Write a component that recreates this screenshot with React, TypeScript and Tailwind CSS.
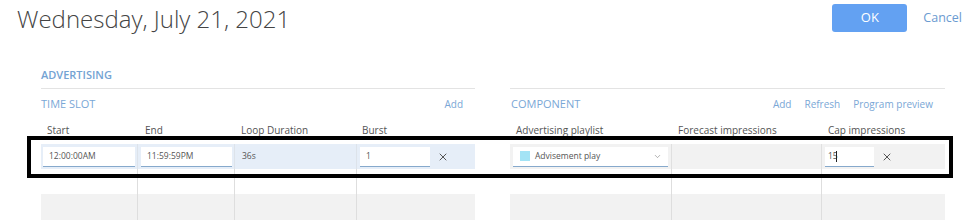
import { X, ChevronDown } from "lucide-react";

function DelIcon() {
  return <X size={12} strokeWidth={2} className="text-[#555]" />;
}

function Field({ value, className }: { value: string; className: string }) {
  return (
    <div
      className={`h-[20px] bg-white border-b border-[#86a9cc] flex items-center pl-[6px] text-[8.5px] text-[#555] ${className}`}
    >
      {value}
    </div>
  );
}

export default function App() {
  return (
    <div className="relative w-[980px] h-[221px] overflow-hidden bg-white font-['Open_Sans',sans-serif]">
      {/* header */}
      <div className="flex items-start justify-between pl-[17px] pr-[18px] pt-[2px]">
        <h1 className="text-[24px] font-light leading-[34px] text-[#444]">
          Wednesday, July 21, 2021
        </h1>
        <div className="flex items-center gap-[16px] pt-[2px]">
          <button
            type="button"
            className="w-[75px] h-[28px] rounded-[3px] bg-[#63a1f2] text-white text-[13px]"
          >
            OK
          </button>
          <span className="text-[12.5px] text-[#6b9bd1]">Cancel</span>
        </div>
      </div>

      <div className="pl-[41px] pr-[35px]">
        <div className="mt-[32px] text-[11px] font-semibold leading-[14px] text-[#74a3d3]">
          ADVERTISING
        </div>

        <div className="mt-[6px] flex gap-[35px]">
          {/* time slot */}
          <div className="w-[434px] border-t border-[#e3e3e3]">
            <div className="mt-[8px] flex items-center justify-between pr-[12px] leading-[14px]">
              <span className="text-[11px] text-[#7aa7d6]">TIME SLOT</span>
              <span className="text-[10px] text-[#7aa7d6]">Add</span>
            </div>
            <div className="mt-[13px] grid grid-cols-[96px_97px_122px_119px] text-[10px] leading-[12px] text-[#555]">
              <span className="pl-[6px]">Start</span>
              <span className="pl-[8px]">End</span>
              <span className="pl-[7px]">Loop Duration</span>
              <span className="pl-[6px]">Burst</span>
            </div>
            <div className="mt-[8px] grid grid-cols-[96px_97px_122px_119px] h-[25px] bg-[#e6eef8]">
              <div className="flex items-center pl-[2px] pr-[2px]">
                <Field value="12:00:00AM" className="w-full" />
              </div>
              <div className="flex items-center pl-[3px] pr-[2px] border-l border-[#dde3ea]">
                <Field value="11:59:59PM" className="w-full" />
              </div>
              <div className="flex items-center pl-[7px] text-[8.5px] text-[#555] border-l border-[#dde3ea]">
                36s
              </div>
              <div className="flex items-center pl-[3px] gap-[7px] border-l border-[#dde3ea]">
                <Field value="1" className="w-[70px]" />
                <DelIcon />
              </div>
            </div>
            <div className="grid grid-cols-[96px_97px_122px_119px] h-[25px]">
              <div />
              <div className="border-l border-[#dedede]" />
              <div className="border-l border-[#dedede]" />
              <div className="border-l border-[#dedede]" />
            </div>
            <div className="grid grid-cols-[96px_97px_122px_119px] h-[26px] bg-[#f2f2f2]">
              <div />
              <div className="border-l border-[#dedede]" />
              <div className="border-l border-[#dedede]" />
              <div className="border-l border-[#dedede]" />
            </div>
          </div>

          {/* component */}
          <div className="w-[435px] border-t border-[#e3e3e3]">
            <div className="mt-[8px] flex items-center justify-between pr-[12px] leading-[14px]">
              <span className="pl-[1px] text-[11px] text-[#7aa7d6]">COMPONENT</span>
              <div className="flex gap-[13px] text-[10px] text-[#7aa7d6]">
                <span>Add</span>
                <span>Refresh</span>
                <span>Program preview</span>
              </div>
            </div>
            <div className="mt-[13px] grid grid-cols-[161px_150px_124px] text-[10px] leading-[12px] text-[#555]">
              <span className="pl-[6px]">Advertising playlist</span>
              <span className="pl-[7px]">Forecast impressions</span>
              <span className="pl-[7px]">Cap impressions</span>
            </div>
            <div className="mt-[8px] grid grid-cols-[161px_150px_124px] h-[25px] bg-[#f2f2f2]">
              <div className="flex items-center pl-[3px] pr-[3px]">
                <div className="w-full h-[20px] bg-white border-b border-[#86a9cc] flex items-center pl-[7px] pr-[6px] text-[8.5px] text-[#555]">
                  <span className="w-[10px] h-[10px] bg-[#a3e3f5]" />
                  <span className="ml-[5px] flex-1">Advisement play</span>
                  <ChevronDown size={9} strokeWidth={1.5} className="text-[#777]" />
                </div>
              </div>
              <div className="border-l border-[#e0e0e0]" />
              <div className="flex items-center pl-[3px] gap-[7px] border-l border-[#e0e0e0]">
                <div className="w-[49px] h-[20px] bg-white border-b border-[#86a9cc] flex items-center pl-[3px] text-[8.5px] text-[#555]">
                  15<span className="ml-[-2px] w-px h-[11px] bg-[#222]" />
                </div>
                <DelIcon />
              </div>
            </div>
            <div className="grid grid-cols-[161px_150px_124px] h-[25px]">
              <div />
              <div className="border-l border-[#dedede]" />
              <div className="border-l border-[#dedede]" />
            </div>
            <div className="grid grid-cols-[161px_150px_124px] h-[26px] bg-[#f2f2f2]">
              <div />
              <div className="border-l border-[#dedede]" />
              <div className="border-l border-[#dedede]" />
            </div>
          </div>
        </div>
      </div>

      {/* highlight frame drawn over the first rows */}
      <div className="absolute left-[27px] top-[136px] w-[926px] h-[42px] border-4 border-black pointer-events-none" />
    </div>
  );
}
